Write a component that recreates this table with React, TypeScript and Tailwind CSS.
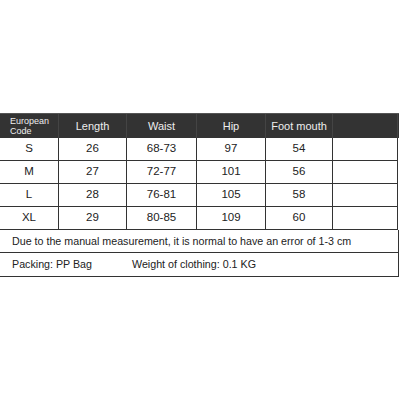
import React from "react";

const cols = "grid grid-cols-[59px_68px_70px_69px_67px_65px]";
const cell = "flex items-center justify-center border-r border-b border-[#333] text-[11.5px] text-[#222]";

const rows = [
  ["S", "26", "68-73", "97", "54"],
  ["M", "27", "72-77", "101", "56"],
  ["L", "28", "76-81", "105", "58"],
  ["XL", "29", "80-85", "109", "60"],
];

export default function App() {
  return (
    <div className="w-[400px] h-[400px] bg-white pt-[113px] font-['Liberation_Sans',Arial,sans-serif]">
      <div className="w-[399px] border-t border-[#555]">
        <div className={`${cols} h-[24px] bg-[#333] text-[#eee]`}>
          <div className="flex flex-col justify-center pl-[10px] text-[9px] leading-[10px] border-r border-[#444]">
            <span>European</span>
            <span>Code</span>
          </div>
          {["Length", "Waist", "Hip", "Foot mouth", ""].map((h, i) => (
            <div key={i} className="flex items-center justify-center text-[11px] border-r border-[#444]">
              {h}
            </div>
          ))}
        </div>
        {rows.map((r) => (
          <div key={r[0]} className={`${cols} h-[23px]`}>
            {[...r, ""].map((v, i) => (
              <div key={i} className={cell}>
                {v}
              </div>
            ))}
          </div>
        ))}
        <div className="h-[23px] flex items-center pl-[12px] border-r border-b border-[#333] text-[10.7px] text-[#222]">
          Due to the manual measurement, it is normal to have an error of 1-3 cm
        </div>
        <div className="h-[24px] flex items-center pl-[12px] border-r border-b border-[#333] text-[10.7px] text-[#222]">
          <span className="w-[120px]">Packing: PP Bag</span>
          <span>Weight of clothing: 0.1 KG</span>
        </div>
      </div>
    </div>
  );
}
